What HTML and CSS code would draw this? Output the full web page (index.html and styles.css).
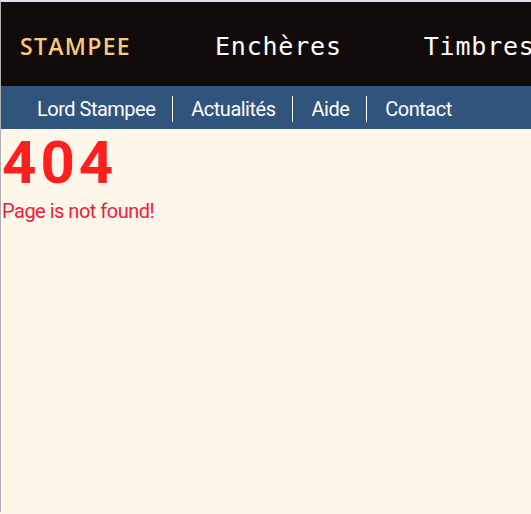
FILE: index.html
```html
<!DOCTYPE html>
<html lang="fr">
<head>
<meta charset="utf-8">
<title>404</title>
<link rel="stylesheet" href="styles.css">
</head>
<body>
<header class="top">
  <a class="brand" href="#">STAMPEE</a>
  <nav class="main-nav">
    <a href="#">Enchères</a>
    <a href="#">Timbres</a>
  </nav>
</header>
<nav class="sub-nav">
  <a href="#">Lord Stampee</a>
  <a href="#">Actualités</a>
  <a href="#">Aide</a>
  <a href="#">Contact</a>
</nav>
<main class="content">
  <h1 class="code">404</h1>
  <p class="msg">Page is not found!</p>
</main>
</body>
</html>
```
FILE: styles.css
```css
html, body { margin: 0; padding: 0; }
body {
  background: #fff8ea;
  border-top: 2px solid #dfe0ea;
  border-left: 1px solid #b0b0b0;
  min-height: 512px;
  box-sizing: border-box;
  overflow: hidden;
  font-family: Roboto, "Liberation Sans", sans-serif;
}
a { text-decoration: none; }
.top {
  background: #120b0c;
  height: 84px;
  display: flex;
  align-items: center;
  padding-left: 19px;
  padding-top: 4px;
  box-sizing: border-box;
  white-space: nowrap;
}
.brand {
  font-family: "Open Sans", sans-serif;
  font-weight: 600;
  font-size: 23px;
  letter-spacing: 1.3px;
  color: #f7c97b;
}
.main-nav {
  display: flex;
  gap: 82px;
  margin-left: 84px;
}
.main-nav a {
  font-family: "DejaVu Sans Mono", monospace;
  font-size: 25px;
  letter-spacing: 0.8px;
  color: #ffffff;
}
.sub-nav {
  background: #31547c;
  height: 43px;
  display: flex;
  align-items: center;
  padding-left: 18px;
  padding-top: 3px;
  box-sizing: border-box;
}
.sub-nav a {
  color: #ffffff;
  font-size: 20px;
  padding: 0 17px 0 18px;
  line-height: 26px;
  border-left: 1px solid #ffffff;
  letter-spacing: -0.5px;
}
.sub-nav a:first-child { border-left: none; }
.content { padding: 0 1px; }
.code {
  margin: 4px 0 0;
  font-size: 60px;
  font-weight: 700;
  color: #ff1f1f;
  line-height: 60px;
  letter-spacing: 4px;
}
.msg {
  margin: 6px 0 0;
  font-size: 20px;
  color: #f0203a;
  letter-spacing: -0.5px;
}
```
